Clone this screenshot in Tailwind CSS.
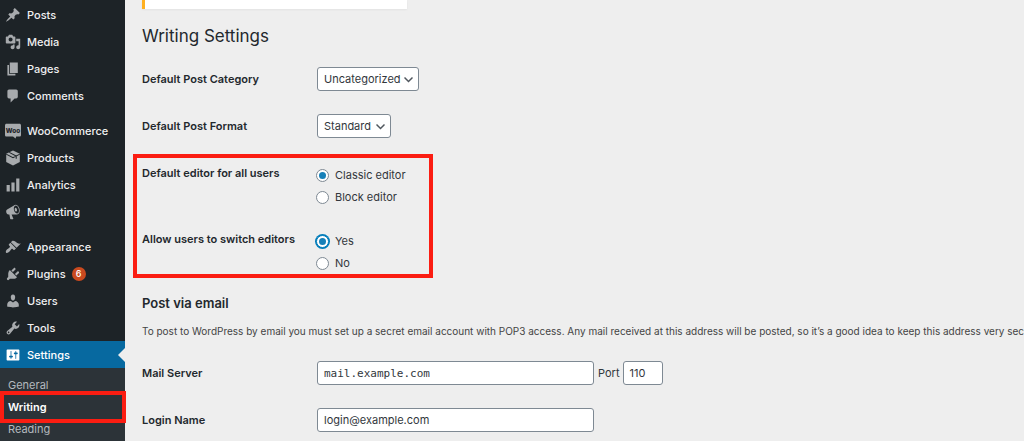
<!DOCTYPE html>
<html lang="en">
<head>
<meta charset="utf-8">
<title>Writing Settings</title>
<script src="https://cdn.jsdelivr.net/npm/@tailwindcss/browser@4"></script>
</head>
<body class="flex min-h-screen bg-[#eeeeee] font-['Inter','Liberation_Sans',sans-serif] text-[11px] leading-4 text-[#32373c]">

<nav aria-label="Admin menu" class="w-[125px] shrink-0 bg-[#1d2327] pt-px font-medium text-[#f0f0f1]">
  <ul>
    <li><a href="#" class="flex h-[27px] items-center gap-[6px] pl-[5px]"><svg class="size-4 fill-[#a7aaad]" viewBox="0 0 20 20"><path d="M10.44 3.02l1.82-1.82 6.36 6.35-1.83 1.82c-1.05-.68-2.48-.57-3.41.36l-.75.75c-.92.93-1.04 2.35-.35 3.41l-1.83 1.82-2.41-2.41-2.8 2.79c-.42.42-3.38 2.71-3.8 2.29s1.86-3.39 2.28-3.81l2.79-2.79L4.1 9.36l1.83-1.82c1.05.69 2.48.57 3.4-.36l.75-.75c.93-.92 1.05-2.35.36-3.41z"/></svg>Posts</a></li>
    <li><a href="#" class="flex h-[27px] items-center gap-[6px] pl-[5px]"><svg class="size-4 fill-[#a7aaad]" viewBox="0 0 20 20"><path d="M13 11V4c0-.55-.45-1-1-1h-1.67L9 1H5L3.67 3H2c-.55 0-1 .45-1 1v7c0 .55.45 1 1 1h10c.55 0 1-.45 1-1zM7 4.5c1.38 0 2.5 1.12 2.5 2.5S8.38 9.5 7 9.5 4.5 8.38 4.5 7 5.62 4.5 7 4.5zM14 6h5v10.5c0 1.38-1.12 2.5-2.5 2.5S14 17.88 14 16.5s1.12-2.5 2.5-2.5c.17 0 .34.02.5.05V9h-3V6zm-4 8.05V13h2v3.5c0 1.38-1.12 2.5-2.5 2.5S7 17.88 7 16.5 8.12 14 9.5 14c.17 0 .34.02.5.05z"/></svg>Media</a></li>
    <li><a href="#" class="flex h-[27px] items-center gap-[6px] pl-[5px]"><svg class="size-4 fill-[#a7aaad]" viewBox="0 0 20 20"><path d="M6 15V2h10v13H6zm-1 1h8v2H3V5h2v11z"/></svg>Pages</a></li>
    <li><a href="#" class="flex h-[27px] items-center gap-[6px] pl-[5px]"><svg class="size-4 fill-[#a7aaad]" viewBox="0 0 20 20"><path d="M5 2h9c1.1 0 2 .9 2 2v7c0 1.1-.9 2-2 2h-2l-5 5v-5H5c-1.1 0-2-.9-2-2V4c0-1.1.9-2 2-2z"/></svg>Comments</a></li>
  </ul>
  <ul class="mt-2">
    <li><a href="#" class="flex h-[27px] items-center gap-[6px] pl-[5px]"><svg class="size-4 fill-[#a7aaad]" viewBox="0 0 20 20"><path d="M2 1h16c1.200 0 2 .8 2 2v12c0 1.200-.8 2-2 2h-4l-.8 2.500-3.200-2.500H2c-1.200 0-2-.8-2-2V3c0-1.200.8-2 2-2z"/><text x="10" y="12" text-anchor="middle" font-size="8" font-weight="800" class="fill-[#1d2327]">Woo</text></svg>WooCommerce</a></li>
    <li><a href="#" class="flex h-[27px] items-center gap-[6px] pl-[5px]"><svg class="size-4 fill-[#a7aaad]" viewBox="0 0 20 20"><path d="M10 .5L18.500 4.700v10.300L10 19.500 1.500 15V4.700z"/><path d="M1.500 5.200L10 9.500l8.500-4.300M5.300 3l8.700 4.500v3.500" fill="none" stroke="#1d2327" stroke-width="1.300"/></svg>Products</a></li>
    <li><a href="#" class="flex h-[27px] items-center gap-[6px] pl-[5px]"><svg class="size-4 fill-[#a7aaad]" viewBox="0 0 20 20"><path d="M18 18V2h-4v16h4zm-6 0V7H8v11h4zm-6 0v-8H2v8h4z"/></svg>Analytics</a></li>
    <li><a href="#" class="flex h-[27px] items-center gap-[6px] pl-[5px]"><svg class="size-4 fill-[#a7aaad]" viewBox="0 0 20 20"><path d="M18.150 5.940c.46 1.620.38 3.220-.02 4.480-.42 1.280-1.260 2.180-2.300 2.480-.16.06-.26.06-.4.06-.06.02-.12.02-.18.02-.06.02-.14.02-.22.02h-6.800l2.220 5.500c.02.14-.06.26-.14.34-.08.1-.24.16-.34.16H6.950c-.1 0-.26-.06-.34-.16-.08-.08-.16-.2-.14-.34l-1-5.500H4.250l-.02-.02c-.5.06-1.080-.18-1.540-.62s-.88-1.080-1.060-1.880c-.24-.8-.2-1.560-.02-2.200.18-.62.58-1.080 1.060-1.300l.02-.02 9-5.400c.1-.06.18-.1.24-.16.06-.04.14-.08.24-.12.16-.08.28-.12.5-.18 1.040-.3 2.240.1 3.220.98s1.840 2.240 2.260 3.860zm-2.580 5.980h-.02c.4-.1.74-.34 1.040-.7.58-.7.86-1.760.86-3.040 0-.64-.1-1.300-.28-1.980-.34-1.360-1.020-2.500-1.780-3.240s-1.680-1.100-2.460-.88c-.82.22-1.400.96-1.700 2-.32 1.040-.28 2.360.06 3.720.38 1.360 1 2.500 1.800 3.240.78.74 1.620 1.100 2.480.88zm-2.540-7.080c.22-.04.42-.02.62.04.38.16.76.48 1.020 1s.42 1.200.42 1.780c0 .3-.04.56-.12.8-.18.48-.44.84-.86.94-.34.1-.8-.06-1.140-.4s-.64-.86-.78-1.500c-.18-.62-.12-1.240.02-1.720s.48-.84.82-.94z"/></svg>Marketing</a></li>
  </ul>
  <ul class="mt-2">
    <li><a href="#" class="flex h-[27px] items-center gap-[6px] pl-[5px]"><svg class="size-4 fill-[#a7aaad]" viewBox="0 0 20 20"><path d="M14.480 11.060L7.410 3.990l1.500-1.500c.5-.56 2.300-.47 3.510.32 1.210.8 1.430 1.280 2.910 2.100 1.180.64 2.450 1.260 4.450.85zm-.71.71L6.700 4.700 4.930 6.470c-.39.39-.39 1.020 0 1.410l1.060 1.060c.39.39.39 1.030 0 1.420-.6.6-1.430 1.110-2.210 1.690-.35.26-.7.53-1.010.84C1.430 14.230.4 16.080 1.400 17.070c.99 1 2.840-.03 4.180-1.360.31-.31.58-.66.85-1.020.57-.78 1.080-1.610 1.690-2.210.39-.39 1.020-.39 1.410 0l1.060 1.060c.39.39 1.020.39 1.410 0z"/></svg>Appearance</a></li>
    <li><a href="#" class="flex h-[27px] items-center gap-[6px] pl-[5px]"><svg class="size-4 fill-[#a7aaad]" viewBox="0 0 20 20"><path d="M13.110 4.360L9.870 7.600 8 5.730l3.240-3.240c.35-.34 1.050-.2 1.560.32.52.51.66 1.210.31 1.550zm-8 1.770l.91-1.120 9.010 9.010-1.190.84c-.71.71-2.630 1.160-3.820 1.160H6.140L4.900 17.260c-.59.59-1.540.59-2.120 0-.59-.58-.59-1.530 0-2.120l1.240-1.240v-3.880c0-1.130.4-3.190 1.090-3.890zm7.260 3.970l3.240-3.240c.34-.35 1.040-.21 1.550.31.52.51.66 1.210.31 1.550l-3.240 3.250z"/></svg>Plugins<span class="flex size-[14px] items-center justify-center rounded-full bg-[#ca4a1f] text-[9px] text-white">6</span></a></li>
    <li><a href="#" class="flex h-[27px] items-center gap-[6px] pl-[5px]"><svg class="size-4 fill-[#a7aaad]" viewBox="0 0 20 20"><path d="M10 9.250c-2.270 0-2.730-3.440-2.730-3.440C7 4.020 7.820 2 9.970 2c2.160 0 2.980 2.020 2.710 3.810 0 0-.41 3.440-2.680 3.440zm0 2.570L12.720 10c2.390 0 4.520 2.330 4.520 4.530v2.490s-3.650 1.130-7.240 1.130c-3.650 0-7.240-1.130-7.240-1.130v-2.490c0-2.250 1.940-4.480 4.470-4.480z"/></svg>Users</a></li>
    <li><a href="#" class="flex h-[27px] items-center gap-[6px] pl-[5px]"><svg class="size-4 fill-[#a7aaad]" viewBox="0 0 20 20"><path d="M16.680 9.770c-1.340 1.340-3.300 1.670-4.950.99l-5.410 6.520c-.99.99-2.590.99-3.580 0s-.99-2.590 0-3.570l6.520-5.420c-.68-1.650-.35-3.610.99-4.950 1.280-1.280 3.120-1.620 4.720-1.060l-2.890 2.890 2.820 2.820 2.860-2.870c.53 1.580.18 3.390-1.080 4.650zM3.810 16.210c.4.39 1.040.39 1.430 0 .4-.4.4-1.040 0-1.430-.39-.4-1.030-.4-1.430 0-.39.39-.39 1.030 0 1.430z"/></svg>Tools</a></li>
    <li>
      <a href="#" class="flex h-[27px] items-center gap-[6px] bg-[#0769a0] pl-[5px] text-white"><svg class="size-4 fill-white" viewBox="0 0 20 20"><path d="M18 16V4c0-.55-.45-1-1-1H3c-.55 0-1 .45-1 1v12c0 .55.45 1 1 1h14c.55 0 1-.45 1-1zM8 11h1c.55 0 1 .45 1 1s-.45 1-1 1H8v1.500c0 .28-.22.5-.5.5s-.5-.22-.5-.5V13H6c-.55 0-1-.45-1-1s.45-1 1-1h1V5.500c0-.28.22-.5.5-.5s.5.22.5.5V11zm5-2h-1c-.55 0-1-.45-1-1s.45-1 1-1h1V5.500c0-.28.22-.5.5-.5s.5.22.5.5V7h1c.55 0 1 .45 1 1s-.45 1-1 1h-1v5.500c0 .28-.22.5-.5.5s-.5-.22-.5-.5V9z"/></svg>Settings<svg class="ml-auto h-[14px] w-[7px] fill-[#eeeeee]" viewBox="0 0 7 14"><path d="M7 0v14L0 7z"/></svg></a>
      <ul class="bg-[#2c3338] pt-[6px] pb-px font-normal text-[#b4b9be]">
        <li><a href="#" class="flex h-[22px] items-center pl-2">General</a></li>
        <li class="relative"><a href="#" aria-current="page" class="flex h-[22px] items-center pl-2 font-semibold text-white">Writing</a><span class="absolute -top-[5px] -right-px left-0 h-8 border-4 border-[#fb1d12]"></span></li>
        <li><a href="#" class="flex h-[22px] items-center pl-2">Reading</a></li>
      </ul>
    </li>
  </ul>
</nav>

<main class="min-w-0 flex-1 pl-[17px]">
  <div class="h-[9px] w-[265px] border-l-[3px] border-[#ffb020] bg-white shadow-xs"></div>
  <h1 class="mt-[15px] text-[17px] leading-6 text-[#23282d]">Writing Settings</h1>

  <form>
    <div class="mt-[19px] flex h-6 items-center">
      <label for="category" class="w-[175px] font-semibold text-[#23282d]">Default Post Category</label>
      <div class="relative">
        <select id="category" class="h-6 w-[102px] appearance-none rounded-[3px] border border-[#7e8993] bg-white pl-[6px]"><option>Uncategorized</option></select>
        <svg class="pointer-events-none absolute top-2 right-[6px] size-[9px]" viewBox="0 0 9 9"><path d="M.5 2.500l4 4 4-4" fill="none" stroke="#50575e" stroke-width="1.500"/></svg>
      </div>
    </div>
    <div class="mt-[23px] flex h-6 items-center">
      <label for="format" class="w-[175px] font-semibold text-[#23282d]">Default Post Format</label>
      <div class="relative">
        <select id="format" class="h-6 w-[74px] appearance-none rounded-[3px] border border-[#7e8993] bg-white pl-[6px]"><option>Standard</option></select>
        <svg class="pointer-events-none absolute top-2 right-[6px] size-[9px]" viewBox="0 0 9 9"><path d="M.5 2.500l4 4 4-4" fill="none" stroke="#50575e" stroke-width="1.500"/></svg>
      </div>
    </div>

    <div class="mt-4 -ml-[9px] w-[300px] border-4 border-[#fb1d12] pt-[6px] pl-[5px]">
      <div role="radiogroup" aria-labelledby="editor-label" class="flex">
        <div id="editor-label" class="w-[174px] pt-px font-semibold text-[#23282d]">Default editor for all users</div>
        <div>
          <label class="flex h-[22px] items-center gap-[6px]"><input type="radio" name="editor" checked class="flex size-[13px] appearance-none items-center justify-center rounded-full border border-[#7e8993] bg-white checked:before:size-[7px] checked:before:rounded-full checked:before:bg-[#1780b8]">Classic editor</label>
          <label class="flex h-[22px] items-center gap-[6px]"><input type="radio" name="editor" class="size-[13px] appearance-none rounded-full border border-[#7e8993] bg-white">Block editor</label>
        </div>
      </div>
      <div role="radiogroup" aria-labelledby="switch-label" class="mt-[22px] flex">
        <div id="switch-label" class="w-[174px] pt-px font-semibold text-[#23282d]">Allow users to switch editors</div>
        <div>
          <label class="flex h-[22px] items-center gap-[6px]"><input type="radio" name="switch" checked class="flex size-[13px] appearance-none items-center justify-center rounded-full border border-[#007cba] bg-white ring ring-[#007cba] checked:before:size-[7px] checked:before:rounded-full checked:before:bg-[#1780b8]">Yes</label>
          <label class="flex h-[22px] items-center gap-[6px]"><input type="radio" name="switch" class="size-[13px] appearance-none rounded-full border border-[#7e8993] bg-white">No</label>
        </div>
      </div>
    </div>

    <h2 class="mt-[15px] text-[13px] leading-5 font-semibold text-[#23282d]">Post via email</h2>
    <p class="mt-[10px] overflow-hidden whitespace-nowrap text-[10px] text-[#444444]">To post to WordPress by email you must set up a secret email account with POP3 access. Any mail received at this address will be posted, so it’s a good idea to keep this address very secret.</p>

    <div class="mt-[22px] flex h-6 items-center">
      <label for="server" class="w-[175px] font-semibold text-[#23282d]">Mail Server</label>
      <input id="server" type="text" value="mail.example.com" class="h-6 w-[277px] rounded-[3px] border border-[#7e8993] bg-white px-[6px] font-['DejaVu_Sans_Mono',monospace]">
      <label for="port" class="ml-1">Port</label>
      <input id="port" type="text" value="110" class="ml-1 h-6 w-10 rounded-[3px] border border-[#7e8993] bg-white px-[5px]">
    </div>
    <div class="mt-[23px] flex h-6 items-center">
      <label for="login" class="w-[175px] font-semibold text-[#23282d]">Login Name</label>
      <input id="login" type="text" value="login@example.com" class="h-6 w-[277px] rounded-[3px] border border-[#7e8993] bg-white px-[6px]">
    </div>
  </form>
</main>
</body>
</html>
